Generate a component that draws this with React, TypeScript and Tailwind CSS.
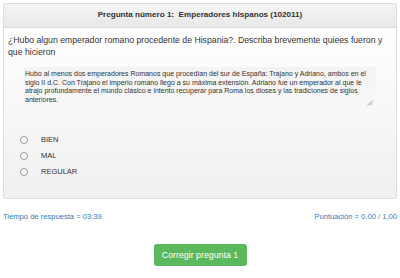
import React from 'react';

const options = ['BIEN', 'MAL', 'REGULAR'];

const App: React.FC = () => {
  return (
    <div className="w-[400px] h-[278px] bg-white px-[3px] pt-[3px] font-['Liberation_Sans',Arial,sans-serif] text-[#333]">
      {/* Question panel */}
      <div className="border border-[#ddd] rounded-[2px] overflow-hidden">
        <div className="h-[24px] flex items-center justify-center border-b border-[#ddd] bg-gradient-to-b from-[#f5f5f5] to-[#e8e8e8] text-[8.1px] font-bold">
          Pregunta número 1:&nbsp; Emperadores hIspanos (102011)
        </div>
        <div className="bg-gradient-to-b from-white to-[#f0f0f0] pb-[22px]">
          <p className="px-[4px] pt-[6px] text-[8.7px] leading-[12px]">
            ¿Hubo algun emperador romano procedente de Hispania?. Describa brevemente quiees fueron y que hicieron
          </p>
          <div className="relative mx-[20px] mt-[9px] h-[42px] bg-gradient-to-b from-[#f3f3f3] to-[#f8f8f8] px-[1px] pt-[3px] text-[7px] leading-[8.6px] text-[#333]">
            Hubo al menos dos emperadores Romanos que procedían del sur de España: Trajano y Adriano, ambos en el siglo II d.C. Con Trajano el imperio romano llego a su máxima extensión. Adriano fue un emperador al que le atrajo profundamente el mundo clásico e intento recuperar para Roma los dioses y las tradiciones de siglos anteriores.
            <svg className="absolute right-[3px] bottom-[3px]" width="6" height="6" viewBox="0 0 6 6">
              <path d="M5.5 0.5 L0.5 5.5 M5.5 3 L3 5.5" stroke="#888" strokeWidth="0.8" />
            </svg>
          </div>
          <div className="mt-[26px] flex flex-col gap-[7px] pl-[16px]">
            {options.map(o => (
              <label key={o} className="flex items-center text-[7.5px] leading-[9px]">
                <span className="w-[8px] h-[8px] rounded-full border border-[#999] bg-white" />
                <span className="ml-[13px]">{o}</span>
              </label>
            ))}
          </div>
        </div>
      </div>

      <div className="mt-[12px] flex justify-between text-[7.6px] text-[#337ab7]">
        <span>Tiempo de respuesta = 03:39</span>
        <span>Puntuación = 0,00 / 1,00</span>
      </div>

      <div className="mt-[22px] flex justify-center">
        <button className="w-[93px] h-[22px] rounded-[3px] bg-[#5cb85c] text-white text-[8.8px]">
          Corregir pregunta 1
        </button>
      </div>
    </div>
  );
};

export default App;
